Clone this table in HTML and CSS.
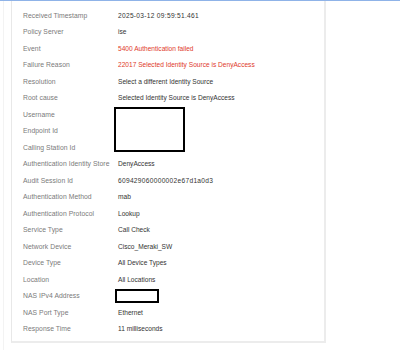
FILE: index.html
```html
<!DOCTYPE html>
<html>
<head>
<meta charset="utf-8">
<link rel="stylesheet" href="styles.css">
</head>
<body>
<div class="page">
  <div class="card">
    <div class="row"><span class="label">Received Timestamp</span><span class="value num">2025-03-12 09:59:51.461</span></div>
    <div class="row"><span class="label">Policy Server</span><span class="value">ise</span></div>
    <div class="row"><span class="label">Event</span><span class="value red">5400 Authentication failed</span></div>
    <div class="row"><span class="label">Failure Reason</span><span class="value red">22017 Selected Identity Source is DenyAccess</span></div>
    <div class="row"><span class="label">Resolution</span><span class="value">Select a different Identity Source</span></div>
    <div class="row"><span class="label">Root cause</span><span class="value">Selected Identity Source is DenyAccess</span></div>
    <div class="row"><span class="label">Username</span><span class="value"><span class="redact big"></span></span></div>
    <div class="row"><span class="label">Endpoint Id</span><span class="value"></span></div>
    <div class="row"><span class="label">Calling Station Id</span><span class="value"></span></div>
    <div class="row"><span class="label">Authentication Identity Store</span><span class="value">DenyAccess</span></div>
    <div class="row"><span class="label">Audit Session Id</span><span class="value num">609429060000002e67d1a0d3</span></div>
    <div class="row"><span class="label">Authentication Method</span><span class="value">mab</span></div>
    <div class="row"><span class="label">Authentication Protocol</span><span class="value">Lookup</span></div>
    <div class="row"><span class="label">Service Type</span><span class="value">Call Check</span></div>
    <div class="row"><span class="label">Network Device</span><span class="value">Cisco_Meraki_SW</span></div>
    <div class="row"><span class="label">Device Type</span><span class="value">All Device Types</span></div>
    <div class="row"><span class="label">Location</span><span class="value">All Locations</span></div>
    <div class="row"><span class="label">NAS IPv4 Address</span><span class="value"><span class="redact small"></span></span></div>
    <div class="row"><span class="label">NAS Port Type</span><span class="value">Ethernet</span></div>
    <div class="row"><span class="label">Response Time</span><span class="value">11 milliseconds</span></div>
  </div>
</div>
</body>
</html>
```
FILE: styles.css
```css
html, body {
  margin: 0;
  padding: 0;
  background: #ffffff;
}
body {
  width: 400px;
  height: 350px;
  overflow: hidden;
  border-top: 1px solid #8fb3e8;
  box-sizing: border-box;
  font-family: "Liberation Sans", Arial, sans-serif;
}
.page {
  margin-left: 3px;
  border-left: 1px solid #f3f3f3;
  padding-left: 7px;
  height: 349px;
}
.card {
  width: 315px;
  border: 1px solid #e8e8e8;
  border-top: none;
  border-right: 2px solid #ececec;
  border-bottom: 2px solid #ececec;
  padding: 6px 0 5px 11px;
  box-sizing: border-box;
  height: 342px;
}
.row {
  display: flex;
  height: 16.5px;
  align-items: center;
  font-size: 6.8px;
  white-space: nowrap;
}
.label {
  width: 95px;
  flex: none;
  color: #7a7a7a;
  letter-spacing: 0.05px;
}
.value {
  color: #333333;
  font-size: 6.6px;
  position: relative;
}
.value.num {
  letter-spacing: 0.3px;
}
.red {
  color: #e0392b;
}
.redact {
  position: absolute;
  border: 2px solid #000;
  background: #fff;
  box-sizing: border-box;
}
.redact.big {
  left: -4px;
  top: -7px;
  width: 71px;
  height: 45px;
}
.redact.small {
  left: -3px;
  top: -7px;
  width: 44px;
  height: 14px;
}
```
